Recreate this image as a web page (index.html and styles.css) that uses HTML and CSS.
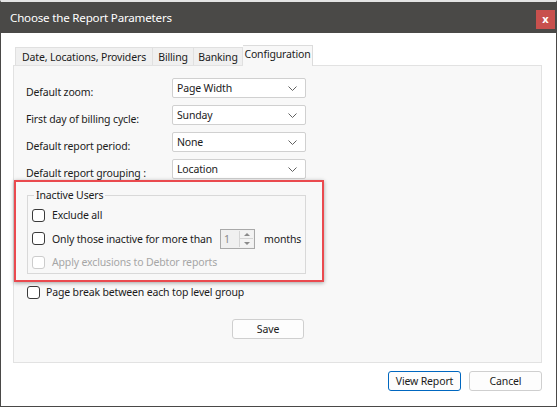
FILE: index.html
```html
<!DOCTYPE html>
<html>
<head>
<meta charset="utf-8">
<link rel="stylesheet" href="styles.css">
</head>
<body>
<div class="window">
  <div class="titlebar">
    <span class="title">Choose the Report Parameters</span>
    <span class="close">x</span>
  </div>
  <div class="content">
    <div class="tabs">
      <div class="tab t1">Date, Locations, Providers</div>
      <div class="tab t2">Billing</div>
      <div class="tab t3">Banking</div>
      <div class="tab t4 active">Configuration</div>
    </div>
    <div class="panel">
      <div class="form">
        <span class="label">Default zoom:</span>
        <div class="combo"><span>Page Width</span><svg class="chev" viewBox="0 0 9 5" width="9" height="5"><path d="M0.5 0.5 L4.5 4.5 L8.5 0.5" fill="none" stroke="#606060" stroke-width="1"/></svg></div>
        <span class="label">First day of billing cycle:</span>
        <div class="combo"><span>Sunday</span><svg class="chev" viewBox="0 0 9 5" width="9" height="5"><path d="M0.5 0.5 L4.5 4.5 L8.5 0.5" fill="none" stroke="#606060" stroke-width="1"/></svg></div>
        <span class="label">Default report period:</span>
        <div class="combo"><span>None</span><svg class="chev" viewBox="0 0 9 5" width="9" height="5"><path d="M0.5 0.5 L4.5 4.5 L8.5 0.5" fill="none" stroke="#606060" stroke-width="1"/></svg></div>
        <span class="label">Default report grouping :</span>
        <div class="combo"><span>Location</span><svg class="chev" viewBox="0 0 9 5" width="9" height="5"><path d="M0.5 0.5 L4.5 4.5 L8.5 0.5" fill="none" stroke="#606060" stroke-width="1"/></svg></div>
      </div>
      <fieldset class="group">
        <legend>Inactive Users</legend>
        <div class="row"><span class="cb"></span><span>Exclude all</span></div>
        <div class="row"><span class="cb"></span><span>Only those inactive for more than</span>
          <div class="spin"><span class="val">1</span><span class="btns"><span class="up"></span><span class="down"></span></span></div>
          <span class="months">months</span>
        </div>
        <div class="row disabled"><span class="cb"></span><span>Apply exclusions to Debtor reports</span></div>
      </fieldset>
      <div class="row pagebreak"><span class="cb"></span><span>Page break between each top level group</span></div>
      <div class="save-row"><button class="btn save">Save</button></div>
      <div class="highlight"></div>
    </div>
    <div class="actions">
      <button class="btn primary">View Report</button>
      <button class="btn">Cancel</button>
    </div>
  </div>
</div>
</body>
</html>
```

FILE: styles.css
```css
* { box-sizing: border-box; }
html, body { margin: 0; padding: 0; background: #fff; }
body {
  font-family: "Noto Sans", "Segoe UI", sans-serif;
  font-size: 10.5px;
  letter-spacing: -0.15px;
  color: #1b1b1b;
}
.window {
  width: 557px;
  height: 407px;
  border: 1px solid #4a4947;
  border-top: 2px solid #e4e4e4;
  background: #fff;
  overflow: hidden;
}
.titlebar {
  height: 31px;
  background: #4a4947;
  display: flex;
  align-items: center;
  justify-content: space-between;
  margin: 0 -1px;
}
.title {
  color: #fff;
  font-size: 11.6px;
  letter-spacing: -0.2px;
  margin-left: 10px;
}
.close {
  align-self: flex-start;
  margin-top: 8px;
  margin-right: 2px;
  width: 19px;
  height: 19px;
  background: #c8504d;
  color: #fff;
  font-weight: bold;
  font-size: 11px;
  line-height: 17px;
  text-align: center;
  letter-spacing: 0;
}
.content {
  padding: 12px 14px 0 12px;
}
.tabs {
  display: flex;
  align-items: flex-end;
  height: 20px;
  padding-left: 2px;
  position: relative;
  z-index: 2;
}
.tab {
  height: 18px;
  background: #f0f0f0;
  border: 1px solid #e0e0e0;
  border-bottom: none;
  border-right: none;
  text-align: center;
  line-height: 18px;
  white-space: nowrap;
}
.t1 { width: 137px; }
.t2 { width: 41px; }
.t3 { width: 50px; border-right: 1px solid #e0e0e0; }
.t4 { width: 70px; }
.tab.active {
  height: 21px;
  margin-bottom: -1px;
  background: #f8f8f8;
  border: 1px solid #dcdcdc;
  border-bottom: none;
  border-left: none;
  line-height: 17px;
}
.panel {
  position: relative;
  height: 298px;
  background: #f8f8f8;
  border: 1px solid #e2e2e2;
  padding: 12px 0 0 12px;
}
.form {
  display: grid;
  grid-template-columns: 146px 134px;
  grid-auto-rows: 20px;
  row-gap: 7px;
}
.label {
  padding-top: 7px;
  line-height: 15px;
  white-space: nowrap;
}
.combo {
  background: #fff;
  border: 1px solid #d0d0d0;
  border-radius: 2px;
  display: flex;
  align-items: center;
  justify-content: space-between;
  padding: 0 8px 0 4px;
  line-height: 18px;
}
.chev { display: block; }
.group {
  margin: 9px 0 0 1px;
  width: 279px;
  border: 1px solid #d9d9d9;
  padding: 2px 4px 1px 4px;
}
.group legend {
  padding: 0 2px;
  margin-left: 2px;
  line-height: 15px;
}
.row {
  display: flex;
  align-items: center;
  height: 20px;
  margin-bottom: 3.5px;
  white-space: nowrap;
}
.group .row:last-of-type { margin-bottom: 0; }
.cb {
  width: 13px;
  height: 13px;
  border: 1px solid #3a3a3a;
  border-radius: 3px;
  background: #fff;
  margin-right: 7px;
  flex: none;
}
.disabled { color: #a6a6a6; }
.disabled .cb { border-color: #cccccc; }
.spin {
  margin-left: 8px;
  width: 35px;
  height: 20px;
  border: 1px solid #a9a9a9;
  background: #f0f0f0;
  display: flex;
  justify-content: space-between;
  padding: 1px;
}
.spin .val {
  color: #8a8a8a;
  padding-left: 2px;
  line-height: 16px;
}
.btns {
  width: 14px;
  display: flex;
  flex-direction: column;
  border-left: 1px solid #d4d4d4;
}
.btns span {
  flex: 1;
  position: relative;
  background: #f3f3f3;
}
.btns .up { border-bottom: 1px solid #d4d4d4; }
.btns .up::after, .btns .down::after {
  content: "";
  position: absolute;
  left: 4px;
  border-left: 3px solid transparent;
  border-right: 3px solid transparent;
}
.btns .up::after { top: 2px; border-bottom: 3px solid #8a8a8a; }
.btns .down::after { top: 3px; border-top: 3px solid #8a8a8a; }
.months { margin-left: 9px; }
.pagebreak {
  margin-top: 8px;
  margin-left: 1px;
}
.pagebreak .cb { margin-right: 6px; }
.save-row {
  margin-top: 17px;
  padding-left: 206px;
}
.btn {
  font-family: inherit;
  font-size: 10.5px;
  letter-spacing: -0.15px;
  color: #1b1b1b;
  width: 73px;
  height: 20px;
  padding: 0;
  background: #fdfdfd;
  border: 1px solid #cfcfcf;
  border-radius: 3px;
  line-height: 17px;
}
.save { width: 72px; }
.btn.primary {
  border: 1px solid #0067c0;
}
.actions {
  display: flex;
  justify-content: flex-end;
  gap: 8px;
  margin-top: 8px;
}
.highlight {
  position: absolute;
  left: 0px;
  top: 114px;
  width: 310px;
  height: 102px;
  border: 2.5px solid #ea4a4f;
  box-shadow: 0 1px 4px rgba(0,0,0,0.35);
  pointer-events: none;
}
```
